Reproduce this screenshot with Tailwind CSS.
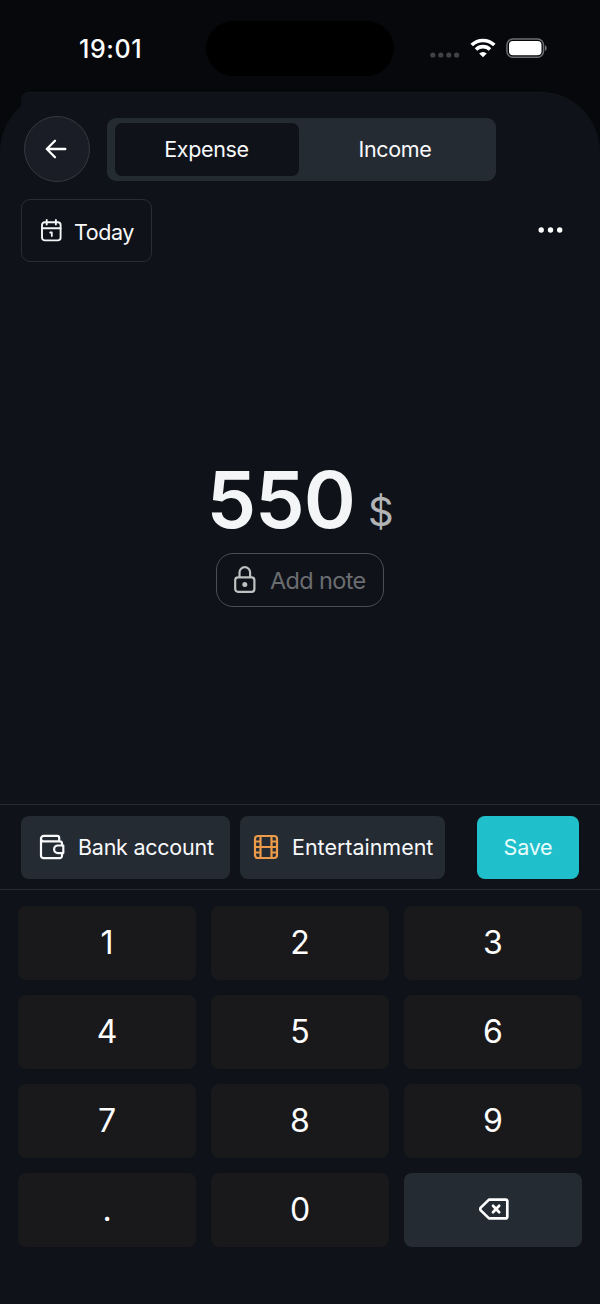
<!DOCTYPE html>
<html lang="en">
<head>
<meta charset="utf-8">
<title>Add expense</title>
<script src="https://cdn.jsdelivr.net/npm/@tailwindcss/browser@4"></script>
</head>
<body class="bg-[#07080c]">
<div class="w-[600px] h-[1304px] flex flex-col overflow-hidden bg-[#07080c] font-['Inter',sans-serif] text-[#f8f9fb]">
  <header class="h-[92px] shrink-0 grid grid-cols-[206px_188px_206px] pt-[21px] pb-4">
    <div class="pl-[79px] pt-[11px] text-[25px] leading-[35px] font-medium tracking-[0.6px] text-white">19:01</div>
    <div class="h-[55px] rounded-full bg-black"></div>
    <div class="flex pl-9 pt-[17px] items-start">
      <svg class="mt-[14px]" width="30" height="6" fill="#414246"><circle cx="2.8" cy="3" r="2.6"/><circle cx="10.8" cy="3" r="2.6"/><circle cx="18.8" cy="3" r="2.6"/><circle cx="26.6" cy="3" r="2.6"/></svg>
      <svg class="ml-[10px]" width="26" height="20" viewBox="0 0 26 20" fill="none" stroke="#fff" stroke-width="3.6"><path d="M1.7 7.1a16 16 0 0 1 22.6 0"/><path d="M6 11.5a9.9 9.9 0 0 1 14 0"/><path d="M13 19.3 9.2 15.5a5.4 5.4 0 0 1 7.6 0z" fill="#fff" stroke="none"/></svg>
      <svg class="ml-[10px]" width="42" height="20" viewBox="0 0 42 20"><rect x=".9" y=".9" width="36.6" height="18.4" rx="6" fill="none" stroke="#6c6d70" stroke-width="1.5"/><rect x="3" y="3" width="32.5" height="14.2" rx="4" fill="#fff"/><path d="M39 7.3c2.2.7 2.2 4.9 0 5.6z" fill="#77787b"/></svg>
    </div>
  </header>

  <main class="relative flex-1 flex flex-col bg-[#0f1218] rounded-t-[60px] border-t border-[#15181b]">
    <div class="absolute left-[21px] -top-px w-12 h-4 rounded-tl-[8px] bg-[#0f1218] border-t border-[#15181b]"></div>
    <div class="relative flex items-center pl-6 pt-[23px] h-[89px]">
      <button class="size-[66px] rounded-full bg-[#1a1d26] border border-[#363941] flex items-center justify-center">
        <svg class="-ml-[3px]" width="22" height="20" viewBox="0 0 22 20" fill="none" stroke="#fff" stroke-width="2.3" stroke-linecap="round" stroke-linejoin="round"><path d="M20.3 10H1.8M10 1.7 1.8 10l8.2 8.3"/></svg>
      </button>
      <div class="ml-[17px] w-[389px] h-[63px] rounded-[9px] bg-[#252b33] py-[5px] pl-2 pr-[5px] flex text-[21.5px] tracking-[-0.35px]">
        <div class="w-[184px] rounded-[7px] bg-[#0f1218] flex items-center justify-center pt-px pr-px">Expense</div>
        <div class="flex-1 flex items-center justify-center pt-px">Income</div>
      </div>
    </div>
    <div class="flex items-center justify-between pl-[21px] pr-[36px] pt-[17px]">
      <button class="w-[131px] h-[63px] rounded-[9px] border border-[#2b2d31] flex items-center pl-[19px] text-[21.5px] tracking-[-0.45px]">
        <svg width="21" height="23" viewBox="0 0 21 23" fill="none" stroke="#f4f5f6" stroke-width="1.9" stroke-linecap="round"><rect x="1" y="3.2" width="18.6" height="18.2" rx="2.8"/><path d="M1 9.2h18.6M5.7 1v4.5M14.9 1v4.5"/><path d="M9.2 13.5h1.6v3.6" stroke-width="1.8" stroke-linejoin="round"/></svg>
        <span class="ml-[12px] pt-[3px]">Today</span>
      </button>
      <svg class="-mt-px" width="26" height="6" fill="#fff"><circle cx="3.2" cy="3" r="2.7"/><circle cx="12.5" cy="3" r="2.7"/><circle cx="21.7" cy="3" r="2.7"/></svg>
    </div>

    <section class="flex-1 flex flex-col items-center pt-[195px]">
      <div class="flex items-baseline h-[85px] leading-[84px]">
        <span class="text-[79px] font-semibold tracking-[-1px] text-[#f3f5f6]">550</span>
        <span class="ml-[13px] -translate-y-[2px] text-[40px] text-[#b3b4b6]">$</span>
      </div>
      <div class="mt-[11px] w-[168px] h-[54px] rounded-[17px] border-[1.5px] border-[#4c4e52] flex items-center pl-[17px] text-[23.5px] tracking-[-0.65px] text-[#6b6d71]">
        <svg width="22" height="28" viewBox="0 0 22 28" fill="none" stroke="#bfc0c2" stroke-width="2.2"><rect x="1.2" y="11.4" width="19.2" height="14.4" rx="2.8"/><path d="M5.5 11.4V6.4a5.3 5.3 0 0 1 10.6 0v5"/><circle cx="10.8" cy="18.6" r="2.5" fill="#bfc0c2" stroke="none"/></svg>
        <span class="ml-[14px] pt-[2px]">Add note</span>
      </div>
    </section>

    <section class="shrink-0 h-[86px] border-y border-[#292b2f] flex items-center px-[21px] text-[21.5px] tracking-[-0.25px] whitespace-nowrap">
      <button class="w-[209px] h-[63px] rounded-[8px] bg-[#252b33] flex items-center pl-[18px]">
        <svg width="26" height="26" viewBox="0 0 26 26" fill="none" stroke="#f8f9fb" stroke-width="2.2" stroke-linejoin="round" stroke-linecap="round"><path d="M2 4.3v17.4a2.4 2.4 0 0 0 2.4 2.4h16.3a2.3 2.3 0 0 0 2.3-2.3v-2.6M23 11.3V9.6a2.3 2.3 0 0 0-2.3-2.3H4.5A2.5 2.5 0 0 1 2 4.8a2.8 2.8 0 0 1 2.8-2.9h13.4a2 2 0 0 1 2 2v3.2"/><path d="M24.3 11.5h-5.4a3.8 3.8 0 0 0 0 7.6h5.4z"/></svg>
        <span class="ml-[13px]">Bank account</span>
      </button>
      <button class="ml-[10px] w-[205px] h-[63px] rounded-[8px] bg-[#252b33] flex items-center pl-[13px]">
        <svg width="26" height="26" viewBox="0 0 26 26" fill="none" stroke="#eb9b4a" stroke-width="2.2"><rect x="2" y="2" width="22" height="22" rx="3"/><path d="M7.5 2v22M18.5 2v22M7.5 13h11M2 7.5h5.5M2 13h5.5M2 18.5h5.5M18.5 7.5H24M18.5 13H24M18.5 18.5H24"/></svg>
        <span class="ml-[13px] tracking-[-0.02px]">Entertainment</span>
      </button>
      <button class="ml-auto w-[102px] h-[63px] rounded-[8px] bg-[#1fc0cb] text-[#eafcfc]">Save</button>
    </section>

    <section class="shrink-0 h-[414px] pt-[16px] px-[18px] grid grid-cols-3 grid-rows-[repeat(4,74px)] gap-[15px] content-start text-[32px] font-normal text-white">
      <button class="rounded-[8px] bg-[#19191b]">1</button>
      <button class="rounded-[8px] bg-[#19191b]">2</button>
      <button class="rounded-[8px] bg-[#19191b]">3</button>
      <button class="rounded-[8px] bg-[#19191b]">4</button>
      <button class="rounded-[8px] bg-[#19191b]">5</button>
      <button class="rounded-[8px] bg-[#19191b]">6</button>
      <button class="rounded-[8px] bg-[#19191b]">7</button>
      <button class="rounded-[8px] bg-[#19191b]">8</button>
      <button class="rounded-[8px] bg-[#19191b]">9</button>
      <button class="rounded-[8px] bg-[#19191b]">.</button>
      <button class="rounded-[8px] bg-[#19191b]">0</button>
      <button class="rounded-[8px] bg-[#252b33] flex items-center justify-center">
        <svg class="ml-[2px] -mt-[2px]" width="30" height="22" viewBox="0 0 30 22" fill="none" stroke="#fff" stroke-width="2.7" stroke-linecap="round" stroke-linejoin="round"><path d="M10 1.6h16.8a1.5 1.5 0 0 1 1.5 1.5v15.8a1.5 1.5 0 0 1-1.5 1.5H10L2 12.6a2.3 2.3 0 0 1 0-3.2z"/><path d="m14 7.8 6.2 6.4M20.2 7.8 14 14.2"/></svg>
      </button>
    </section>
  </main>
</div>
</body>
</html>
